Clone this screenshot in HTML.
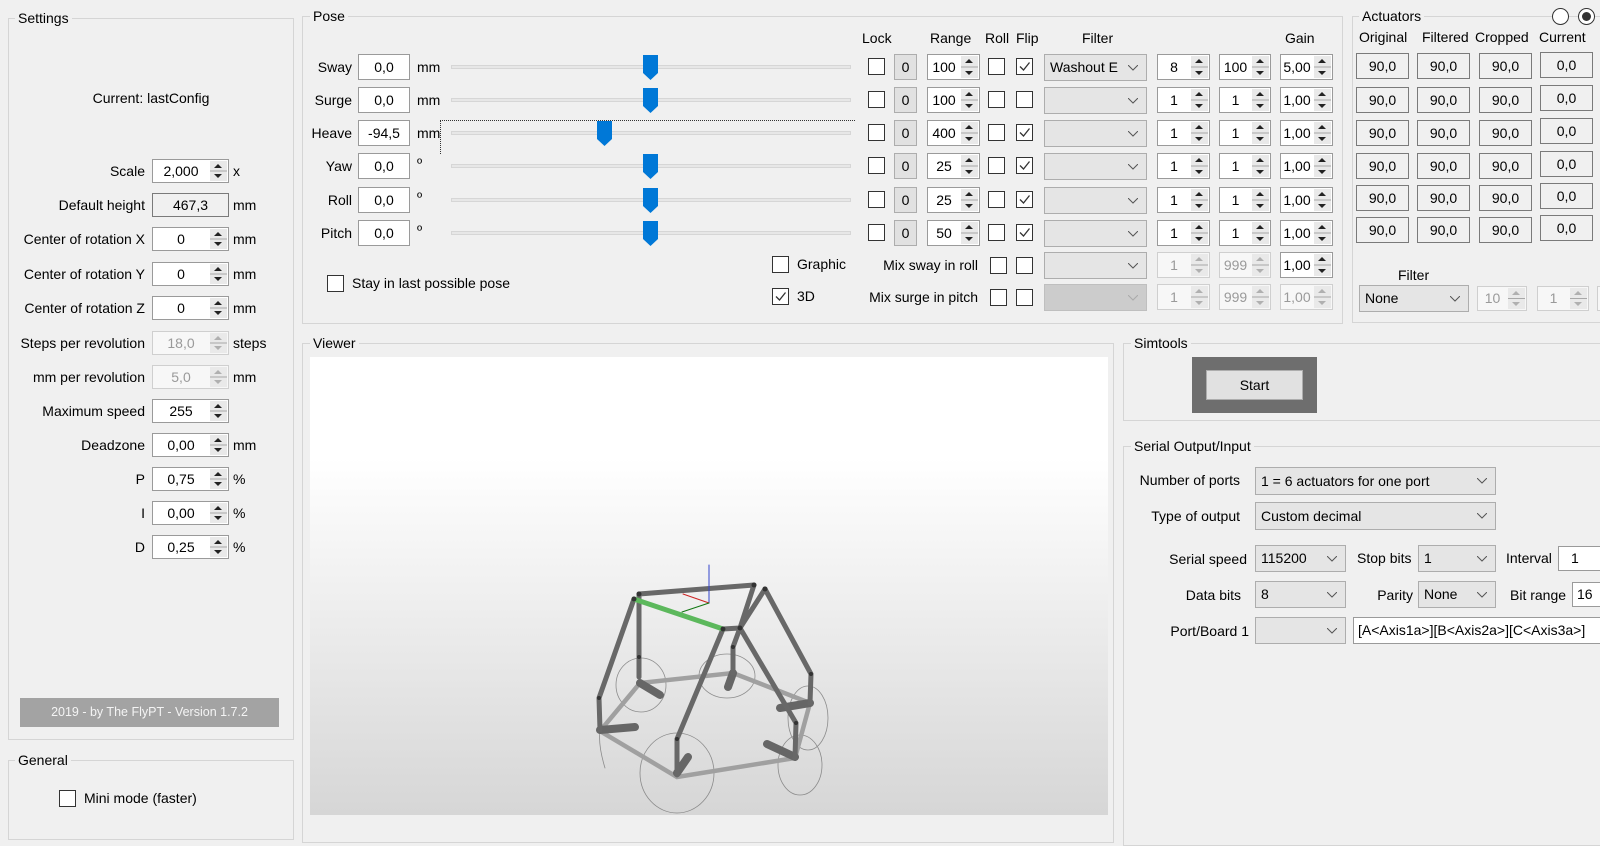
<!DOCTYPE html>
<html><head><meta charset="utf-8"><style>
body{margin:0;width:1600px;height:815px;background:#f0f0f0;position:relative;overflow:hidden;font:14px "Liberation Sans",sans-serif;color:#000}
div{position:absolute;box-sizing:border-box}
.g{border:1px solid #d5d5d5}
.gl{background:#f0f0f0;padding:0 3px;line-height:16px;white-space:nowrap}
.t{white-space:nowrap;line-height:16px}
.r{text-align:right}
.i{background:#fff;border:1px solid #9a9a9a;text-align:center;padding-right:19px;white-space:nowrap}
.i.d{background:#f7f7f7;border-color:#cfcfcf;color:#9a9a9a}
.i.ro{background:#f0f0f0;border-color:#7a7a7a;padding-right:0}
.sp{right:1px;top:1px;bottom:1px;width:17px;background:linear-gradient(#e9e9e9 0 47%,#a8a8a8 47% 53%,#e9e9e9 53%)}
.sp:before,.sp:after{content:"";position:absolute;left:4px;border-left:4px solid transparent;border-right:4px solid transparent}
.sp:before{top:3px;border-bottom:4px solid #222}
.sp:after{bottom:3px;border-top:4px solid #222}
.d .sp:before{border-bottom-color:#b0b0b0}.d .sp:after{border-top-color:#b0b0b0}
.cb{width:17px;height:17px;background:#fff;border:1px solid #333}
.z{width:23px;height:26px;background:#e1e1e1;border:1px solid #adadad;text-align:center;line-height:24px}
.c{background:#e5e5e5;border:1px solid #adadad;padding-left:5px;white-space:nowrap}
.c.d{background:#cccccc;border-color:#bfbfbf}
.c svg{position:absolute;right:8px;top:50%;margin-top:-3px}
.a{width:53px;height:26px;background:#f0f0f0;border:1px solid #7a7a7a;text-align:center;line-height:24px}
.tr{left:451px;width:400px;height:4px;background:#e7e7e7;border:1px solid #d6d6d6}
</style></head><body>

<!-- Settings -->
<div class="g" style="left:8px;top:18px;width:286px;height:722px"></div>
<div class="gl" style="left:15px;top:10px">Settings</div>
<div class="t" style="left:0;width:302px;text-align:center;top:90px">Current: lastConfig</div>

<div class="t r" style="left:0;width:145px;top:163px">Scale</div>
<div class="i" style="left:152px;top:159px;width:77px;height:24px;line-height:22px">2,000<div class="sp"></div></div>
<div class="t" style="left:233px;top:163px">x</div>

<div class="t r" style="left:0;width:145px;top:197px">Default height</div>
<div class="i ro" style="left:152px;top:193px;width:77px;height:24px;line-height:22px">467,3</div>
<div class="t" style="left:233px;top:197px">mm</div>

<div class="t r" style="left:0;width:145px;top:231px">Center of rotation X</div>
<div class="i" style="left:152px;top:227px;width:77px;height:24px;line-height:22px">0<div class="sp"></div></div>
<div class="t" style="left:233px;top:231px">mm</div>

<div class="t r" style="left:0;width:145px;top:266px">Center of rotation Y</div>
<div class="i" style="left:152px;top:262px;width:77px;height:24px;line-height:22px">0<div class="sp"></div></div>
<div class="t" style="left:233px;top:266px">mm</div>

<div class="t r" style="left:0;width:145px;top:300px">Center of rotation Z</div>
<div class="i" style="left:152px;top:296px;width:77px;height:24px;line-height:22px">0<div class="sp"></div></div>
<div class="t" style="left:233px;top:300px">mm</div>

<div class="t r" style="left:0;width:145px;top:335px">Steps per revolution</div>
<div class="i d" style="left:152px;top:331px;width:77px;height:24px;line-height:22px">18,0<div class="sp"></div></div>
<div class="t" style="left:233px;top:335px">steps</div>

<div class="t r" style="left:0;width:145px;top:369px">mm per revolution</div>
<div class="i d" style="left:152px;top:365px;width:77px;height:24px;line-height:22px">5,0<div class="sp"></div></div>
<div class="t" style="left:233px;top:369px">mm</div>

<div class="t r" style="left:0;width:145px;top:403px">Maximum speed</div>
<div class="i" style="left:152px;top:399px;width:77px;height:24px;line-height:22px">255<div class="sp"></div></div>

<div class="t r" style="left:0;width:145px;top:437px">Deadzone</div>
<div class="i" style="left:152px;top:433px;width:77px;height:24px;line-height:22px">0,00<div class="sp"></div></div>
<div class="t" style="left:233px;top:437px">mm</div>

<div class="t r" style="left:0;width:145px;top:471px">P</div>
<div class="i" style="left:152px;top:467px;width:77px;height:24px;line-height:22px">0,75<div class="sp"></div></div>
<div class="t" style="left:233px;top:471px">%</div>

<div class="t r" style="left:0;width:145px;top:505px">I</div>
<div class="i" style="left:152px;top:501px;width:77px;height:24px;line-height:22px">0,00<div class="sp"></div></div>
<div class="t" style="left:233px;top:505px">%</div>

<div class="t r" style="left:0;width:145px;top:539px">D</div>
<div class="i" style="left:152px;top:535px;width:77px;height:24px;line-height:22px">0,25<div class="sp"></div></div>
<div class="t" style="left:233px;top:539px">%</div>

<div style="left:20px;top:698px;width:259px;height:29px;background:#a3a3a3;color:#f4f4f4;text-align:center;line-height:29px;font-size:12.5px">2019 - by The FlyPT - Version 1.7.2</div>

<!-- General -->
<div class="g" style="left:8px;top:760px;width:286px;height:80px"></div>
<div class="gl" style="left:15px;top:752px">General</div>
<div class="cb" style="left:59px;top:790px"></div>
<div class="t" style="left:84px;top:790px">Mini mode (faster)</div>

<!-- Pose -->
<div class="g" style="left:302px;top:16px;width:1041px;height:308px"></div>
<div class="gl" style="left:310px;top:8px">Pose</div>

<div class="t r" style="left:300px;width:52px;top:59px">Sway</div>
<div class="i" style="left:358px;top:54px;width:52px;height:26px;line-height:24px;padding:0">0,0</div>
<div class="t" style="left:417px;top:59px">mm</div>
<div class="tr" style="top:65px"></div>

<div class="t r" style="left:300px;width:52px;top:92px">Surge</div>
<div class="i" style="left:358px;top:87px;width:52px;height:26px;line-height:24px;padding:0">0,0</div>
<div class="t" style="left:417px;top:92px">mm</div>
<div class="tr" style="top:98px"></div>

<div class="t r" style="left:296px;width:56px;top:125px">Heave</div>
<div class="i" style="left:358px;top:120px;width:52px;height:26px;line-height:24px;padding:0">-94,5</div>
<div class="t" style="left:417px;top:125px">mm</div>
<div class="tr" style="top:131px"></div>
<div style="left:440px;top:120px;width:415px;height:34px;border-top:1px dotted #333;border-left:1px dotted #333"></div>

<div class="t r" style="left:300px;width:52px;top:158px">Yaw</div>
<div class="i" style="left:358px;top:153px;width:52px;height:26px;line-height:24px;padding:0">0,0</div>
<div class="t" style="left:417px;top:155px">º</div>
<div class="tr" style="top:164px"></div>

<div class="t r" style="left:300px;width:52px;top:192px">Roll</div>
<div class="i" style="left:358px;top:187px;width:52px;height:26px;line-height:24px;padding:0">0,0</div>
<div class="t" style="left:417px;top:189px">º</div>
<div class="tr" style="top:198px"></div>

<div class="t r" style="left:300px;width:52px;top:225px">Pitch</div>
<div class="i" style="left:358px;top:220px;width:52px;height:26px;line-height:24px;padding:0">0,0</div>
<div class="t" style="left:417px;top:222px">º</div>
<div class="tr" style="top:231px"></div>

<svg style="position:absolute;left:0;top:0" width="1600" height="815">
<defs><path id="h" d="M0 0H15V18L7.5 25L0 18Z" fill="#0078d7"/></defs>
<use href="#h" x="643" y="55"/><use href="#h" x="643" y="88"/><use href="#h" x="597" y="121"/>
<use href="#h" x="643" y="154"/><use href="#h" x="643" y="188"/><use href="#h" x="643" y="221"/>
</svg>

<div class="cb" style="left:327px;top:275px"></div>
<div class="t" style="left:352px;top:275px">Stay in last possible pose</div>
<div class="cb" style="left:772px;top:256px"></div>
<div class="t" style="left:797px;top:256px">Graphic</div>
<div class="cb" style="left:772px;top:288px"><svg width="15" height="15"><path d="M3 7.5L6.5 11L12.5 3.5" stroke="#333" stroke-width="1.3" fill="none"/></svg></div>
<div class="t" style="left:797px;top:288px">3D</div>

<div class="t" style="left:862px;top:30px">Lock</div>
<div class="t" style="left:930px;top:30px">Range</div>
<div class="t" style="left:985px;top:30px">Roll</div>
<div class="t" style="left:1016px;top:30px">Flip</div>
<div class="t" style="left:1082px;top:30px">Filter</div>
<div class="t" style="left:1285px;top:30px">Gain</div>

<!-- rows -->
<div class="cb" style="left:868px;top:58px"></div><div class="z" style="left:894px;top:54px">0</div>
<div class="i" style="left:927px;top:54px;width:53px;height:26px;line-height:24px">100<div class="sp"></div></div>
<div class="cb" style="left:988px;top:58px"></div>
<div class="cb" style="left:1016px;top:58px"><svg width="15" height="15"><path d="M3 7.5L6.5 11L12.5 3.5" stroke="#333" stroke-width="1.3" fill="none"/></svg></div>
<div class="c" style="left:1044px;top:54px;width:103px;height:27px;line-height:25px">Washout E<svg width="10" height="6"><path d="M0 0L5 5L10 0" stroke="#555" fill="none"/></svg></div>
<div class="i" style="left:1157px;top:54px;width:53px;height:26px;line-height:24px">8<div class="sp"></div></div>
<div class="i" style="left:1219px;top:54px;width:52px;height:26px;line-height:24px">100<div class="sp"></div></div>
<div class="i" style="left:1280px;top:54px;width:53px;height:26px;line-height:24px">5,00<div class="sp"></div></div>

<div class="cb" style="left:868px;top:91px"></div><div class="z" style="left:894px;top:87px">0</div>
<div class="i" style="left:927px;top:87px;width:53px;height:26px;line-height:24px">100<div class="sp"></div></div>
<div class="cb" style="left:988px;top:91px"></div><div class="cb" style="left:1016px;top:91px"></div>
<div class="c" style="left:1044px;top:87px;width:103px;height:27px"><svg width="10" height="6"><path d="M0 0L5 5L10 0" stroke="#555" fill="none"/></svg></div>
<div class="i" style="left:1157px;top:87px;width:53px;height:26px;line-height:24px">1<div class="sp"></div></div>
<div class="i" style="left:1219px;top:87px;width:52px;height:26px;line-height:24px">1<div class="sp"></div></div>
<div class="i" style="left:1280px;top:87px;width:53px;height:26px;line-height:24px">1,00<div class="sp"></div></div>

<div class="cb" style="left:868px;top:124px"></div><div class="z" style="left:894px;top:120px">0</div>
<div class="i" style="left:927px;top:120px;width:53px;height:26px;line-height:24px">400<div class="sp"></div></div>
<div class="cb" style="left:988px;top:124px"></div>
<div class="cb" style="left:1016px;top:124px"><svg width="15" height="15"><path d="M3 7.5L6.5 11L12.5 3.5" stroke="#333" stroke-width="1.3" fill="none"/></svg></div>
<div class="c" style="left:1044px;top:120px;width:103px;height:27px"><svg width="10" height="6"><path d="M0 0L5 5L10 0" stroke="#555" fill="none"/></svg></div>
<div class="i" style="left:1157px;top:120px;width:53px;height:26px;line-height:24px">1<div class="sp"></div></div>
<div class="i" style="left:1219px;top:120px;width:52px;height:26px;line-height:24px">1<div class="sp"></div></div>
<div class="i" style="left:1280px;top:120px;width:53px;height:26px;line-height:24px">1,00<div class="sp"></div></div>

<div class="cb" style="left:868px;top:157px"></div><div class="z" style="left:894px;top:153px">0</div>
<div class="i" style="left:927px;top:153px;width:53px;height:26px;line-height:24px">25<div class="sp"></div></div>
<div class="cb" style="left:988px;top:157px"></div>
<div class="cb" style="left:1016px;top:157px"><svg width="15" height="15"><path d="M3 7.5L6.5 11L12.5 3.5" stroke="#333" stroke-width="1.3" fill="none"/></svg></div>
<div class="c" style="left:1044px;top:153px;width:103px;height:27px"><svg width="10" height="6"><path d="M0 0L5 5L10 0" stroke="#555" fill="none"/></svg></div>
<div class="i" style="left:1157px;top:153px;width:53px;height:26px;line-height:24px">1<div class="sp"></div></div>
<div class="i" style="left:1219px;top:153px;width:52px;height:26px;line-height:24px">1<div class="sp"></div></div>
<div class="i" style="left:1280px;top:153px;width:53px;height:26px;line-height:24px">1,00<div class="sp"></div></div>

<div class="cb" style="left:868px;top:191px"></div><div class="z" style="left:894px;top:187px">0</div>
<div class="i" style="left:927px;top:187px;width:53px;height:26px;line-height:24px">25<div class="sp"></div></div>
<div class="cb" style="left:988px;top:191px"></div>
<div class="cb" style="left:1016px;top:191px"><svg width="15" height="15"><path d="M3 7.5L6.5 11L12.5 3.5" stroke="#333" stroke-width="1.3" fill="none"/></svg></div>
<div class="c" style="left:1044px;top:187px;width:103px;height:27px"><svg width="10" height="6"><path d="M0 0L5 5L10 0" stroke="#555" fill="none"/></svg></div>
<div class="i" style="left:1157px;top:187px;width:53px;height:26px;line-height:24px">1<div class="sp"></div></div>
<div class="i" style="left:1219px;top:187px;width:52px;height:26px;line-height:24px">1<div class="sp"></div></div>
<div class="i" style="left:1280px;top:187px;width:53px;height:26px;line-height:24px">1,00<div class="sp"></div></div>

<div class="cb" style="left:868px;top:224px"></div><div class="z" style="left:894px;top:220px">0</div>
<div class="i" style="left:927px;top:220px;width:53px;height:26px;line-height:24px">50<div class="sp"></div></div>
<div class="cb" style="left:988px;top:224px"></div>
<div class="cb" style="left:1016px;top:224px"><svg width="15" height="15"><path d="M3 7.5L6.5 11L12.5 3.5" stroke="#333" stroke-width="1.3" fill="none"/></svg></div>
<div class="c" style="left:1044px;top:220px;width:103px;height:27px"><svg width="10" height="6"><path d="M0 0L5 5L10 0" stroke="#555" fill="none"/></svg></div>
<div class="i" style="left:1157px;top:220px;width:53px;height:26px;line-height:24px">1<div class="sp"></div></div>
<div class="i" style="left:1219px;top:220px;width:52px;height:26px;line-height:24px">1<div class="sp"></div></div>
<div class="i" style="left:1280px;top:220px;width:53px;height:26px;line-height:24px">1,00<div class="sp"></div></div>

<div class="t r" style="left:830px;width:148px;top:257px">Mix sway in roll</div>
<div class="cb" style="left:990px;top:257px"></div><div class="cb" style="left:1016px;top:257px"></div>
<div class="c" style="left:1044px;top:252px;width:103px;height:27px"><svg width="10" height="6"><path d="M0 0L5 5L10 0" stroke="#555" fill="none"/></svg></div>
<div class="i d" style="left:1157px;top:252px;width:53px;height:26px;line-height:24px">1<div class="sp"></div></div>
<div class="i d" style="left:1219px;top:252px;width:52px;height:26px;line-height:24px">999<div class="sp"></div></div>
<div class="i" style="left:1280px;top:252px;width:53px;height:26px;line-height:24px">1,00<div class="sp"></div></div>

<div class="t r" style="left:830px;width:148px;top:289px">Mix surge in pitch</div>
<div class="cb" style="left:990px;top:289px"></div><div class="cb" style="left:1016px;top:289px"></div>
<div class="c d" style="left:1044px;top:284px;width:103px;height:27px"><svg width="10" height="6"><path d="M0 0L5 5L10 0" stroke="#aaa" fill="none"/></svg></div>
<div class="i d" style="left:1157px;top:284px;width:53px;height:26px;line-height:24px">1<div class="sp"></div></div>
<div class="i d" style="left:1219px;top:284px;width:52px;height:26px;line-height:24px">999<div class="sp"></div></div>
<div class="i d" style="left:1280px;top:284px;width:53px;height:26px;line-height:24px">1,00<div class="sp"></div></div>

<!-- Actuators -->
<div class="g" style="left:1352px;top:16px;width:260px;height:307px"></div>
<div class="gl" style="left:1359px;top:8px">Actuators</div>
<div style="left:1552px;top:8px;width:17px;height:17px;border:1px solid #333;border-radius:50%;background:#fff"></div>
<div style="left:1578px;top:8px;width:17px;height:17px;border:1px solid #333;border-radius:50%;background:#fff"><div style="left:3px;top:3px;width:9px;height:9px;border-radius:50%;background:#333"></div></div>
<div class="t" style="left:1359px;top:29px">Original</div>
<div class="t" style="left:1422px;top:29px">Filtered</div>
<div class="t" style="left:1475px;top:29px">Cropped</div>
<div class="t" style="left:1539px;top:29px">Current</div>

<div class="a" style="left:1356px;top:53px">90,0</div><div class="a" style="left:1417px;top:53px">90,0</div><div class="a" style="left:1479px;top:53px">90,0</div><div class="a" style="left:1540px;top:52px">0,0</div>
<div class="a" style="left:1356px;top:87px">90,0</div><div class="a" style="left:1417px;top:87px">90,0</div><div class="a" style="left:1479px;top:87px">90,0</div><div class="a" style="left:1540px;top:85px">0,0</div>
<div class="a" style="left:1356px;top:120px">90,0</div><div class="a" style="left:1417px;top:120px">90,0</div><div class="a" style="left:1479px;top:120px">90,0</div><div class="a" style="left:1540px;top:118px">0,0</div>
<div class="a" style="left:1356px;top:153px">90,0</div><div class="a" style="left:1417px;top:153px">90,0</div><div class="a" style="left:1479px;top:153px">90,0</div><div class="a" style="left:1540px;top:151px">0,0</div>
<div class="a" style="left:1356px;top:185px">90,0</div><div class="a" style="left:1417px;top:185px">90,0</div><div class="a" style="left:1479px;top:185px">90,0</div><div class="a" style="left:1540px;top:183px">0,0</div>
<div class="a" style="left:1356px;top:217px">90,0</div><div class="a" style="left:1417px;top:217px">90,0</div><div class="a" style="left:1479px;top:217px">90,0</div><div class="a" style="left:1540px;top:215px">0,0</div>

<div class="t" style="left:1398px;top:267px">Filter</div>
<div class="c" style="left:1359px;top:285px;width:110px;height:27px;line-height:25px">None<svg width="10" height="6"><path d="M0 0L5 5L10 0" stroke="#555" fill="none"/></svg></div>
<div class="i d" style="left:1477px;top:286px;width:50px;height:25px;line-height:23px">10<div class="sp"></div></div>
<div class="i d" style="left:1537px;top:286px;width:52px;height:25px;line-height:23px">1<div class="sp"></div></div>
<div class="i d" style="left:1597px;top:286px;width:30px;height:25px"></div>

<!-- Viewer -->
<div class="g" style="left:302px;top:343px;width:812px;height:500px"></div>
<div class="gl" style="left:310px;top:335px">Viewer</div>
<div style="left:310px;top:357px;width:798px;height:458px;background:linear-gradient(#fff 0%,#fff 22%,#d6d6d6 100%)"></div>

<svg style="position:absolute;left:0;top:0" width="1600" height="815" fill="none" stroke-linecap="round">
<g stroke="#777" stroke-width="0.8" opacity="0.8">
<ellipse cx="641" cy="685" rx="25" ry="27"/>
<ellipse cx="727" cy="676" rx="28" ry="22"/>
<ellipse cx="677" cy="773" rx="37" ry="40"/>
<ellipse cx="808" cy="718" rx="20" ry="32"/>
<ellipse cx="800" cy="765" rx="22" ry="30"/>
<path d="M600 731 Q598 745 605 768"/>
</g>
<g stroke="#a0a0a0" stroke-width="4.5">
<path d="M640 683L600 731L677 777L795 758L810 703L733 673Z"/>
</g>
<g stroke="#666" stroke-width="8">
<path d="M640 683L660 695M600 730L635 727M677 773L688 757M795 757L767 744M810 703L780 708M733 673L728 687"/>
</g>
<g stroke="#686868" stroke-width="5">
<path d="M639 594L754 585M723 629L740 628M754 585L740 628M765 589L740 628"/>
<path d="M639 594L639 677M634 599L599 698L600 730M723 629L677 739L677 775M740 628L733 647L733 673M740 628L796 723L795 758M765 589L811 674L810 703"/>
</g>
<path d="M634 599L723 629" stroke="#5cb85c" stroke-width="5"/>
<g fill="#333" stroke="none">
<circle cx="639" cy="594" r="2.5"/><circle cx="754" cy="585" r="2.5"/><circle cx="765" cy="589" r="2.5"/><circle cx="740" cy="628" r="2.5"/><circle cx="723" cy="629" r="2.5"/><circle cx="634" cy="599" r="2.5"/>
<circle cx="639" cy="657" r="2"/><circle cx="599" cy="698" r="2"/><circle cx="677" cy="739" r="2"/><circle cx="733" cy="647" r="2"/><circle cx="796" cy="723" r="2"/><circle cx="811" cy="674" r="2"/>
</g>
<path d="M709 565V603" stroke="#3344cc" stroke-width="1"/>
<path d="M709 603L683 594" stroke="#cc2222" stroke-width="1"/>
<path d="M709 603L682 612" stroke="#117711" stroke-width="1"/>
</svg>

<!-- Simtools -->
<div class="g" style="left:1123px;top:343px;width:500px;height:78px"></div>
<div class="gl" style="left:1131px;top:335px">Simtools</div>
<div style="left:1192px;top:357px;width:125px;height:56px;background:#6e6e6e"></div>
<div style="left:1206px;top:370px;width:97px;height:30px;background:#e1e1e1;border:1px solid #adadad;text-align:center;line-height:28px">Start</div>

<!-- Serial -->
<div class="g" style="left:1123px;top:446px;width:500px;height:400px"></div>
<div class="gl" style="left:1131px;top:438px">Serial Output/Input</div>
<div class="t r" style="left:1120px;width:120px;top:472px">Number of ports</div>
<div class="c" style="left:1255px;top:467px;width:241px;height:28px;line-height:26px">1 = 6 actuators for one port<svg width="10" height="6"><path d="M0 0L5 5L10 0" stroke="#555" fill="none"/></svg></div>
<div class="t r" style="left:1120px;width:120px;top:508px">Type of output</div>
<div class="c" style="left:1255px;top:502px;width:241px;height:28px;line-height:26px">Custom decimal<svg width="10" height="6"><path d="M0 0L5 5L10 0" stroke="#555" fill="none"/></svg></div>

<div class="t r" style="left:1120px;width:127px;top:551px">Serial speed</div>
<div class="c" style="left:1255px;top:545px;width:91px;height:27px;line-height:25px">115200<svg width="10" height="6"><path d="M0 0L5 5L10 0" stroke="#555" fill="none"/></svg></div>
<div class="t" style="left:1357px;top:550px">Stop bits</div>
<div class="c" style="left:1418px;top:545px;width:78px;height:27px;line-height:25px">1<svg width="10" height="6"><path d="M0 0L5 5L10 0" stroke="#555" fill="none"/></svg></div>
<div class="t" style="left:1506px;top:550px">Interval</div>
<div class="i" style="left:1558px;top:546px;width:60px;height:25px;line-height:23px;text-align:left;padding-left:12px">1</div>

<div class="t r" style="left:1120px;width:121px;top:587px">Data bits</div>
<div class="c" style="left:1255px;top:581px;width:91px;height:27px;line-height:25px">8<svg width="10" height="6"><path d="M0 0L5 5L10 0" stroke="#555" fill="none"/></svg></div>
<div class="t r" style="left:1350px;width:63px;top:587px">Parity</div>
<div class="c" style="left:1418px;top:581px;width:78px;height:27px;line-height:25px">None<svg width="10" height="6"><path d="M0 0L5 5L10 0" stroke="#555" fill="none"/></svg></div>
<div class="t" style="left:1510px;top:587px">Bit range</div>
<div class="i" style="left:1572px;top:582px;width:50px;height:25px;line-height:23px;text-align:left;padding-left:4px">16</div>

<div class="t r" style="left:1120px;width:129px;top:623px">Port/Board 1</div>
<div class="c" style="left:1255px;top:617px;width:91px;height:27px"><svg width="10" height="6"><path d="M0 0L5 5L10 0" stroke="#555" fill="none"/></svg></div>
<div class="i" style="left:1353px;top:617px;width:260px;height:27px;line-height:25px;text-align:left;padding-left:4px">[A&lt;Axis1a&gt;][B&lt;Axis2a&gt;][C&lt;Axis3a&gt;]</div>

</body></html>
